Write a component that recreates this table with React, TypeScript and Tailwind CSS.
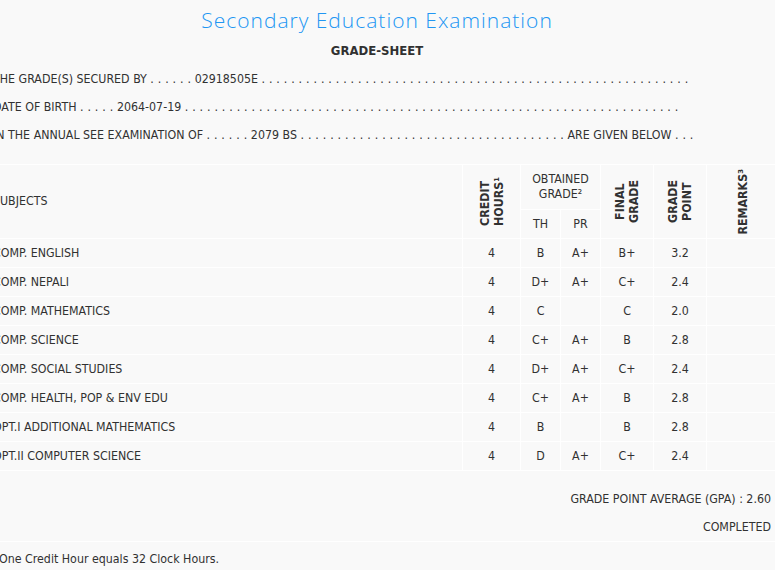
import React from "react";

const dots = (n: number) => Array(n).fill(".").join(" ");

const Dots = ({ n }: { n: number }) => <span className="tracking-[0.2px]">{dots(n)}</span>;

const rows: string[][] = [
  ["COMP. ENGLISH", "4", "B", "A+", "B+", "3.2"],
  ["COMP. NEPALI", "4", "D+", "A+", "C+", "2.4"],
  ["COMP. MATHEMATICS", "4", "C", "", "C", "2.0"],
  ["COMP. SCIENCE", "4", "C+", "A+", "B", "2.8"],
  ["COMP. SOCIAL STUDIES", "4", "D+", "A+", "C+", "2.4"],
  ["COMP. HEALTH, POP & ENV EDU", "4", "C+", "A+", "B", "2.8"],
  ["OPT.I ADDITIONAL MATHEMATICS", "4", "B", "", "B", "2.8"],
  ["OPT.II COMPUTER SCIENCE", "4", "D", "A+", "C+", "2.4"],
];

export default function App() {
  return (
    <div className="w-[775px] h-[570px] overflow-hidden bg-[#f9f9f9] text-[#313131] font-['DejaVu_Sans_Condensed','Liberation_Sans',sans-serif] text-[12.3px]">
      <div className="w-[802px] -ml-[24px]">
        <h1 className="text-center text-[#2196f3] font-['Open_Sans',sans-serif] font-light text-[21px] tracking-[1px] leading-[28px] pt-[6px]">
          Secondary Education Examination
        </h1>
        <div className="text-center font-bold text-[13px] leading-[18px] mt-[8px]">GRADE-SHEET</div>
        <div className="pl-[17px] mt-[5px] leading-[28px] whitespace-nowrap">
          <div>
            THE GRADE(S) SECURED BY <Dots n={6} /> 02918505E <Dots n={58} />
          </div>
          <div>
            DATE OF BIRTH <Dots n={5} /> 2064-07-19 <Dots n={67} />
          </div>
          <div>
            IN THE ANNUAL SEE EXAMINATION OF <Dots n={6} /> 2079 BS <Dots n={36} /> ARE GIVEN BELOW <Dots n={3} />
          </div>
        </div>
        <table className="mt-[15px] ml-[8px] w-[794px] table-fixed border-collapse">
          <colgroup>
            <col className="w-[478px]" />
            <col className="w-[58px]" />
            <col className="w-[40px]" />
            <col className="w-[40px]" />
            <col className="w-[53px]" />
            <col className="w-[53px]" />
            <col className="w-[72px]" />
          </colgroup>
          <thead>
            <tr>
              <th rowSpan={2} className="border border-white text-left font-normal pl-[8px]">
                SUBJECTS
              </th>
              <th rowSpan={2} className="border border-white font-bold">
                <div className="flex justify-center">
                  <span className="[writing-mode:vertical-rl] rotate-180 leading-[14px] text-left">
                    CREDIT
                    <br />
                    HOURS¹
                  </span>
                </div>
              </th>
              <th colSpan={2} className="border border-white font-normal h-[45px] leading-[15px]">
                OBTAINED
                <br />
                GRADE²
              </th>
              <th rowSpan={2} className="border border-white font-bold">
                <div className="flex justify-center">
                  <span className="[writing-mode:vertical-rl] rotate-180 leading-[14px] text-center">
                    FINAL
                    <br />
                    GRADE
                  </span>
                </div>
              </th>
              <th rowSpan={2} className="border border-white font-bold">
                <div className="flex justify-center">
                  <span className="[writing-mode:vertical-rl] rotate-180 leading-[14px] text-center">
                    GRADE
                    <br />
                    POINT
                  </span>
                </div>
              </th>
              <th rowSpan={2} className="border border-white font-bold">
                <div className="flex justify-center">
                  <span className="[writing-mode:vertical-rl] rotate-180 leading-[14px]">REMARKS³</span>
                </div>
              </th>
            </tr>
            <tr>
              <th className="border border-white font-normal h-[29px]">TH</th>
              <th className="border border-white font-normal h-[29px]">PR</th>
            </tr>
          </thead>
          <tbody>
            {rows.map((r) => (
              <tr key={r[0]} className="h-[29px]">
                <td className="border border-white pl-[8px]">{r[0]}</td>
                {r.slice(1).map((c, i) => (
                  <td key={i} className="border border-white text-center">
                    {c}
                  </td>
                ))}
                <td className="border border-white"></td>
              </tr>
            ))}
          </tbody>
        </table>
        <div className="ml-[8px] w-[794px] border-b border-white pt-[14px] text-right pr-[7px] leading-[28px]">
          <div>GRADE POINT AVERAGE (GPA) : 2.60</div>
          <div>COMPLETED</div>
        </div>
        <div className="pl-[23px] pt-[8px] leading-[18px]">One Credit Hour equals 32 Clock Hours.</div>
      </div>
    </div>
  );
}
